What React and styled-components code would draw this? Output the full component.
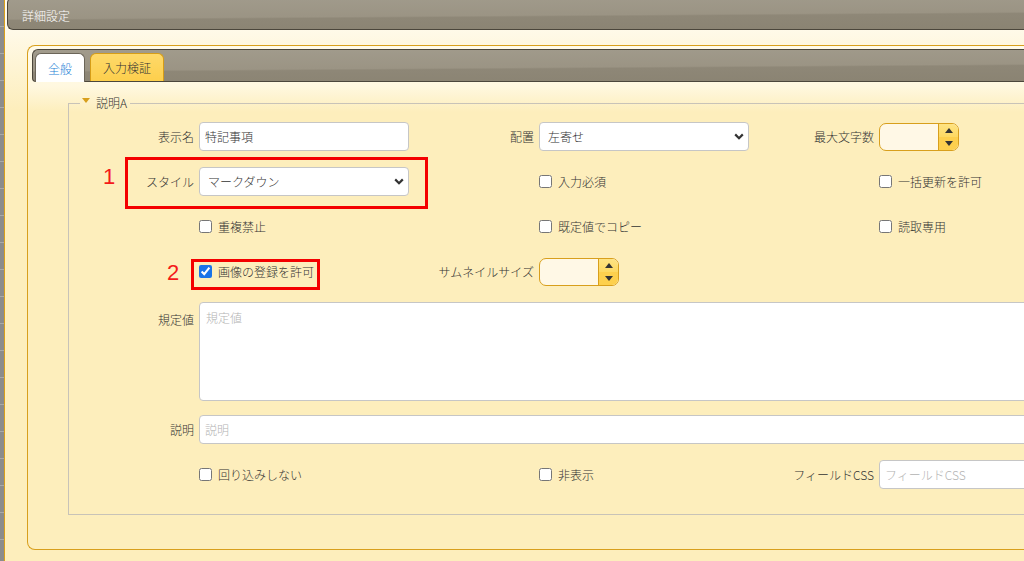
import React from 'react';
import styled, { createGlobalStyle } from 'styled-components';

const GOLD = '#d89f1c';
const DARK = '#4b463b';
const CREAM = '#fdeebc';
const BAR_BG = `linear-gradient(179.6deg, #a19b8c 0%, #9b9484 52%, #8e8777 56%, #8a8372 100%)`;

const GlobalStyle = createGlobalStyle`
  *, *::before, *::after { box-sizing: border-box; }
  html, body { margin: 0; height: 100%; overflow: hidden; }
  body {
    font-family: "Noto Sans CJK JP", "Noto Sans", sans-serif;
    font-size: 12px;
    font-weight: 300;
    color: #333;
    background: repeating-linear-gradient(to bottom, #8c8c8c 0 26px, #a9a9a9 26px 27px);
  }
`;

const Backdrop = styled.div`
  display: flex;
  height: 100vh;
  padding-left: 4px;
`;

const Dialog = styled.div`
  flex: none;
  width: 1320px;
  border-left: 1px solid ${GOLD};
  background: linear-gradient(to bottom, #fffaea 28px, ${CREAM} 110px);
`;

const TitleBar = styled.div`
  display: flex;
  align-items: center;
  height: 33px;
  margin: -3px 0 0 2px;
  padding: 3px 0 0 14px;
  color: #fff;
  border: 1px solid ${DARK};
  border-right: none;
  border-radius: 6px 0 0 6px;
  background: ${BAR_BG};
`;

const Body = styled.div`
  padding: 15px 0 0 22px;
`;

const TabPanel = styled.div`
  padding: 3px 0 0 4px;
  border: 1px solid ${GOLD};
  border-right: none;
  border-radius: 8px 0 0 8px;
  background: linear-gradient(to bottom, #fffbea 0, #fff8e0 40px, ${CREAM} 66px);
`;

const TabBar = styled.div`
  display: flex;
  align-items: flex-end;
  gap: 5px;
  height: 33px;
  padding-left: 2px;
  border: 1px solid ${DARK};
  border-right: none;
  border-radius: 6px 0 0 4px;
  background: ${BAR_BG};
`;

const Tab = styled.div`
  display: flex;
  align-items: center;
  padding: 0 12px;
  border-radius: 6px 6px 0 0;
  border: 1px solid ${(p) => (p.$active ? '#6b6558' : '#d69d17')};
  border-bottom: none;
  height: ${(p) => (p.$active ? '29px' : '28px')};
  margin-bottom: ${(p) => (p.$active ? '-1px' : '0')};
  color: ${(p) => (p.$active ? '#1e7fd6' : '#333')};
  background: ${(p) => (p.$active ? '#fff' : 'linear-gradient(to bottom, #fed96a, #fdcf4c)')};
`;

const TabContent = styled.div`
  padding: 14px 0 34px 36px;
`;

const Fieldset = styled.fieldset`
  margin: 0;
  min-width: 0;
  padding: 12px 0 25px 0;
  border: 1px solid #c8c3b8;
`;

const Legend = styled.legend`
  display: flex;
  align-items: center;
  gap: 6px;
  margin-left: 11px;
  padding: 0 3px 0 2px;
  line-height: 14px;
`;

const Caret = styled.span`
  width: 0;
  height: 0;
  margin-top: -5px;
  border-left: 4px solid transparent;
  border-right: 4px solid transparent;
  border-top: 5px solid ${GOLD};
`;

const Annotated = styled.div`
  position: relative;
`;

const Grid = styled.div`
  display: grid;
  grid-template-columns: 125px 210px 120px 210px 120px 1fr;
  grid-template-rows: repeat(4, 29px) 97px 29px 29px;
  column-gap: 5px;
  row-gap: 16px;
`;

const FieldLabel = styled.div`
  grid-column: ${(p) => p.$col};
  align-self: ${(p) => (p.$top ? 'start' : 'center')};
  padding-top: ${(p) => (p.$top ? '9px' : '0')};
  text-align: right;
  white-space: nowrap;
`;

const Cell = styled.div`
  grid-column: ${(p) => p.$col};
  display: flex;
  align-items: ${(p) => (p.$top ? 'flex-start' : 'center')};
  min-width: 0;
`;

const TextInput = styled.input`
  width: 100%;
  height: 29px;
  padding: 0 5px;
  font: inherit;
  color: #333;
  background: #fff;
  border: 1px solid #c6c6c6;
  border-radius: 4px;
  outline: none;

  &::placeholder { color: #b3b3b3; }
`;

const TextArea = styled.textarea`
  width: 100%;
  height: 99px;
  padding: 6px 6px;
  font: inherit;
  color: #333;
  resize: none;
  background: #fff;
  border: 1px solid #c6c6c6;
  border-radius: 4px;
  outline: none;

  &::placeholder { color: #b3b3b3; }
`;

const SelectWrap = styled.div`
  position: relative;
  width: 100%;
`;

const Select = styled.select`
  appearance: none;
  width: 100%;
  height: 29px;
  padding: 0 24px 0 8px;
  font: inherit;
  color: #333;
  background: #fff;
  border: 1px solid #c6c6c6;
  border-radius: 4px;
  outline: none;
`;

const Chevron = styled.svg`
  position: absolute;
  right: 5px;
  top: 11px;
  pointer-events: none;
`;

const Spinner = styled.div`
  display: flex;
  width: 80px;
  height: 28px;
  border: 1px solid ${GOLD};
  border-radius: 7px;
  overflow: hidden;
  background: #fff8e6;
`;

const SpinField = styled.input`
  flex: 1;
  min-width: 0;
  border: none;
  background: transparent;
  font: inherit;
  outline: none;
`;

const SpinButtons = styled.div`
  display: flex;
  flex-direction: column;
  width: 20px;
  border-left: 1px solid ${GOLD};
`;

const SpinButton = styled.div`
  flex: 1;
  display: flex;
  align-items: center;
  justify-content: center;
  background: ${(p) => (p.$up ? 'linear-gradient(to bottom, #fee383, #fdd962)' : '#fdd04e')};
`;

const Arrow = styled.span`
  width: 0;
  height: 0;
  border-left: 4px solid transparent;
  border-right: 4px solid transparent;
  ${(p) => (p.$up ? 'border-bottom: 5px solid #333;' : 'border-top: 5px solid #333;')}
`;

const Check = styled.label`
  grid-column: ${(p) => p.$col};
  display: flex;
  align-items: center;
  gap: 6px;
  white-space: nowrap;

  input {
    width: 13px;
    height: 13px;
    margin: 0;
    accent-color: #1a73e8;
  }
`;

const Callout = styled.div`
  position: absolute;
  border: 3px solid #f40000;
`;

const Marker = styled.span`
  position: absolute;
  font-family: "Liberation Sans", Arial, sans-serif;
  font-size: 22px;
  font-weight: 400;
  line-height: 22px;
  color: #f41a1a;
`;

function NumberSpinner() {
  return (
    <Spinner>
      <SpinField type="text" />
      <SpinButtons>
        <SpinButton $up><Arrow $up /></SpinButton>
        <SpinButton><Arrow /></SpinButton>
      </SpinButtons>
    </Spinner>
  );
}

function Dropdown({ value, options }) {
  return (
    <SelectWrap>
      <Select defaultValue={value}>
        {options.map((o) => (
          <option key={o}>{o}</option>
        ))}
      </Select>
      <Chevron width="10" height="7" viewBox="0 0 10 7">
        <path d="M1.2 1.4 L5 5.2 L8.8 1.4" fill="none" stroke="#333" strokeWidth="2.2" />
      </Chevron>
    </SelectWrap>
  );
}

function CheckItem({ col, checked, children }) {
  return (
    <Check $col={col}>
      <input type="checkbox" defaultChecked={checked} />
      {children}
    </Check>
  );
}

export default function App() {
  return (
    <>
      <GlobalStyle />
      <Backdrop>
        <Dialog>
          <TitleBar>詳細設定</TitleBar>
          <Body>
            <TabPanel>
              <TabBar>
                <Tab $active>全般</Tab>
                <Tab>入力検証</Tab>
              </TabBar>
              <TabContent>
                <Fieldset>
                  <Legend>
                    <Caret />
                    説明A
                  </Legend>
                  <Annotated>
                    <Grid>
                      <FieldLabel $col={1}>表示名</FieldLabel>
                      <Cell $col={2}>
                        <TextInput defaultValue="特記事項" />
                      </Cell>
                      <FieldLabel $col={3}>配置</FieldLabel>
                      <Cell $col={4}>
                        <Dropdown value="左寄せ" options={['左寄せ', '中央', '右寄せ']} />
                      </Cell>
                      <FieldLabel $col={5}>最大文字数</FieldLabel>
                      <Cell $col={6}>
                        <NumberSpinner />
                      </Cell>

                      <FieldLabel $col={1}>スタイル</FieldLabel>
                      <Cell $col={2}>
                        <Dropdown value="マークダウン" options={['テキスト', 'マークダウン', 'HTML']} />
                      </Cell>
                      <CheckItem col={4}>入力必須</CheckItem>
                      <CheckItem col={6}>一括更新を許可</CheckItem>

                      <CheckItem col={2}>重複禁止</CheckItem>
                      <CheckItem col={4}>既定値でコピー</CheckItem>
                      <CheckItem col={6}>読取専用</CheckItem>

                      <CheckItem col={2} checked>画像の登録を許可</CheckItem>
                      <FieldLabel $col={3}>サムネイルサイズ</FieldLabel>
                      <Cell $col={4}>
                        <NumberSpinner />
                      </Cell>

                      <FieldLabel $col={1} $top>規定値</FieldLabel>
                      <Cell $col="2 / -1" $top>
                        <TextArea placeholder="規定値" />
                      </Cell>

                      <FieldLabel $col={1}>説明</FieldLabel>
                      <Cell $col="2 / -1">
                        <TextInput placeholder="説明" />
                      </Cell>

                      <CheckItem col={2}>回り込みしない</CheckItem>
                      <CheckItem col={4}>非表示</CheckItem>
                      <FieldLabel $col={5}>フィールドCSS</FieldLabel>
                      <Cell $col={6}>
                        <TextInput placeholder="フィールドCSS" />
                      </Cell>
                    </Grid>

                    <Marker style={{ left: 34, top: 44 }}>1</Marker>
                    <Callout style={{ left: 56, top: 35, width: 303, height: 52 }} />
                    <Marker style={{ left: 98, top: 140 }}>2</Marker>
                    <Callout style={{ left: 122, top: 137, width: 129, height: 31 }} />
                  </Annotated>
                </Fieldset>
              </TabContent>
            </TabPanel>
          </Body>
        </Dialog>
      </Backdrop>
    </>
  );
}
